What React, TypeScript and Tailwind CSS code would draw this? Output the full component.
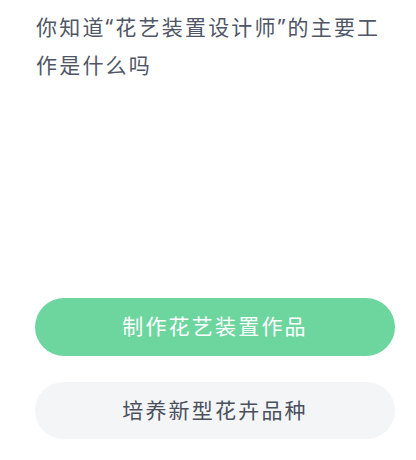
export default function App() {
  return (
    <div
      className="h-[460px] w-[416px] bg-white"
      style={{ fontFamily: '"Noto Sans", "Noto Sans CJK SC", sans-serif' }}
    >
      <div className="pl-[36px] pr-[24px] pt-[8px]">
        <p className="text-[21px] leading-[38px] tracking-[2.2px] text-[#4f5666]">
          你知道“花艺装置设计师”的主要工作是什么吗
        </p>
      </div>
      <div className="mt-[214px] flex flex-col gap-[26px] pl-[35px]">
        <button
          type="button"
          className="h-[58px] w-[360px] rounded-full bg-[#6dd69f] text-[21px] tracking-[2.2px] text-white"
        >
          制作花艺装置作品
        </button>
        <button
          type="button"
          className="h-[57px] w-[360px] rounded-full bg-[#f4f5f7] text-[21px] tracking-[2.2px] text-[#4a505c]"
        >
          培养新型花卉品种
        </button>
      </div>
    </div>
  );
}
